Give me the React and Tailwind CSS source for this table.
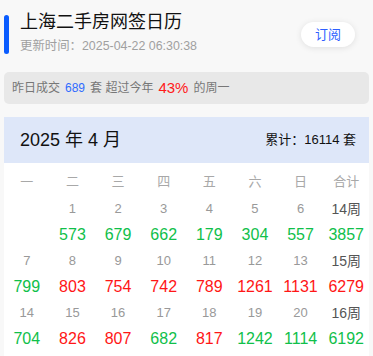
import React from "react";

const G = "text-[#10c04a]";
const R = "text-[#ff1616]";

const weeks = [
  {
    days: ["", "1", "2", "3", "4", "5", "6"],
    label: "14周",
    vals: [
      ["", G], ["573", G], ["679", G], ["662", G], ["179", G], ["304", G], ["557", G], ["3857", G],
    ],
  },
  {
    days: ["7", "8", "9", "10", "11", "12", "13"],
    label: "15周",
    vals: [
      ["799", G], ["803", R], ["754", R], ["742", R], ["789", R], ["1261", R], ["1131", R], ["6279", R],
    ],
  },
  {
    days: ["14", "15", "16", "17", "18", "19", "20"],
    label: "16周",
    vals: [
      ["704", G], ["826", R], ["807", R], ["682", G], ["817", R], ["1242", G], ["1114", G], ["6192", G],
    ],
  },
];

const heads = ["一", "二", "三", "四", "五", "六", "日", "合计"];

export default function App() {
  return (
    <div
      className="w-[373px] h-[356px] bg-[#f8f8f8] overflow-hidden"
      style={{ fontFamily: '"Liberation Sans", "Noto Sans CJK SC", sans-serif' }}
    >
      <div className="flex items-start pt-[10px] pl-[4px] pr-[18px]">
        <div className="w-[5px] h-[39px] mt-[5px] rounded-[3px] bg-[#0a5cff]" />
        <div className="ml-[11px] flex flex-col">
          <div className="text-[18px] leading-[24px] text-[#111]">上海二手房网签日历</div>
          <div className="text-[12.4px] leading-[16px] mt-[4px] text-[#a0a0a0]">
            更新时间：2025-04-22 06:30:38
          </div>
        </div>
        <div className="ml-auto mt-[12px] w-[54px] h-[25px] rounded-full bg-white shadow-[0_1px_6px_rgba(0,0,0,0.10)] flex items-center justify-center text-[13px] text-[#2e5fff]">
          订阅
        </div>
      </div>

      <div className="mx-[4px] mt-[18px] h-[32px] rounded-[5px] bg-[#e8e8e8] flex items-center pl-[8px] text-[12px] text-[#777]">
        <span>昨日成交</span>
        <span className="ml-[5px] text-[#2f6bff]">689</span>
        <span className="ml-[5px]">套 超过今年</span>
        <span className="ml-[5px] text-[15px] text-[#ff1a1a]">43%</span>
        <span className="ml-[5px]">的周一</span>
      </div>

      <div className="mx-[4px] mt-[13px] h-[46px] bg-[#dee7f9] flex items-center justify-between pl-[16px] pr-[13px]">
        <span className="text-[18px] text-[#111]">2025 年 4 月</span>
        <span className="text-[13px] text-[#111]">累计：16114 套</span>
      </div>

      <div className="mx-[4px] bg-white pt-[5px] h-[200px]">
        <div className="grid grid-cols-8 h-[28px] items-center text-[13px] text-[#a8a8a8]">
          {heads.map((h) => (
            <div key={h} className="text-center">{h}</div>
          ))}
        </div>
        {weeks.map((w) => (
          <React.Fragment key={w.label}>
            <div className="grid grid-cols-8 h-[26px] items-center text-[13px] text-[#999]">
              {w.days.map((d, i) => (
                <div key={i} className="text-center">{d}</div>
              ))}
              <div className="text-center text-[14px] text-[#555]">{w.label}</div>
            </div>
            <div className="grid grid-cols-8 h-[26px] items-center text-[16px]">
              {w.vals.map(([v, c], i) => (
                <div key={i} className={"text-center " + c}>{v}</div>
              ))}
            </div>
          </React.Fragment>
        ))}
      </div>
    </div>
  );
}
